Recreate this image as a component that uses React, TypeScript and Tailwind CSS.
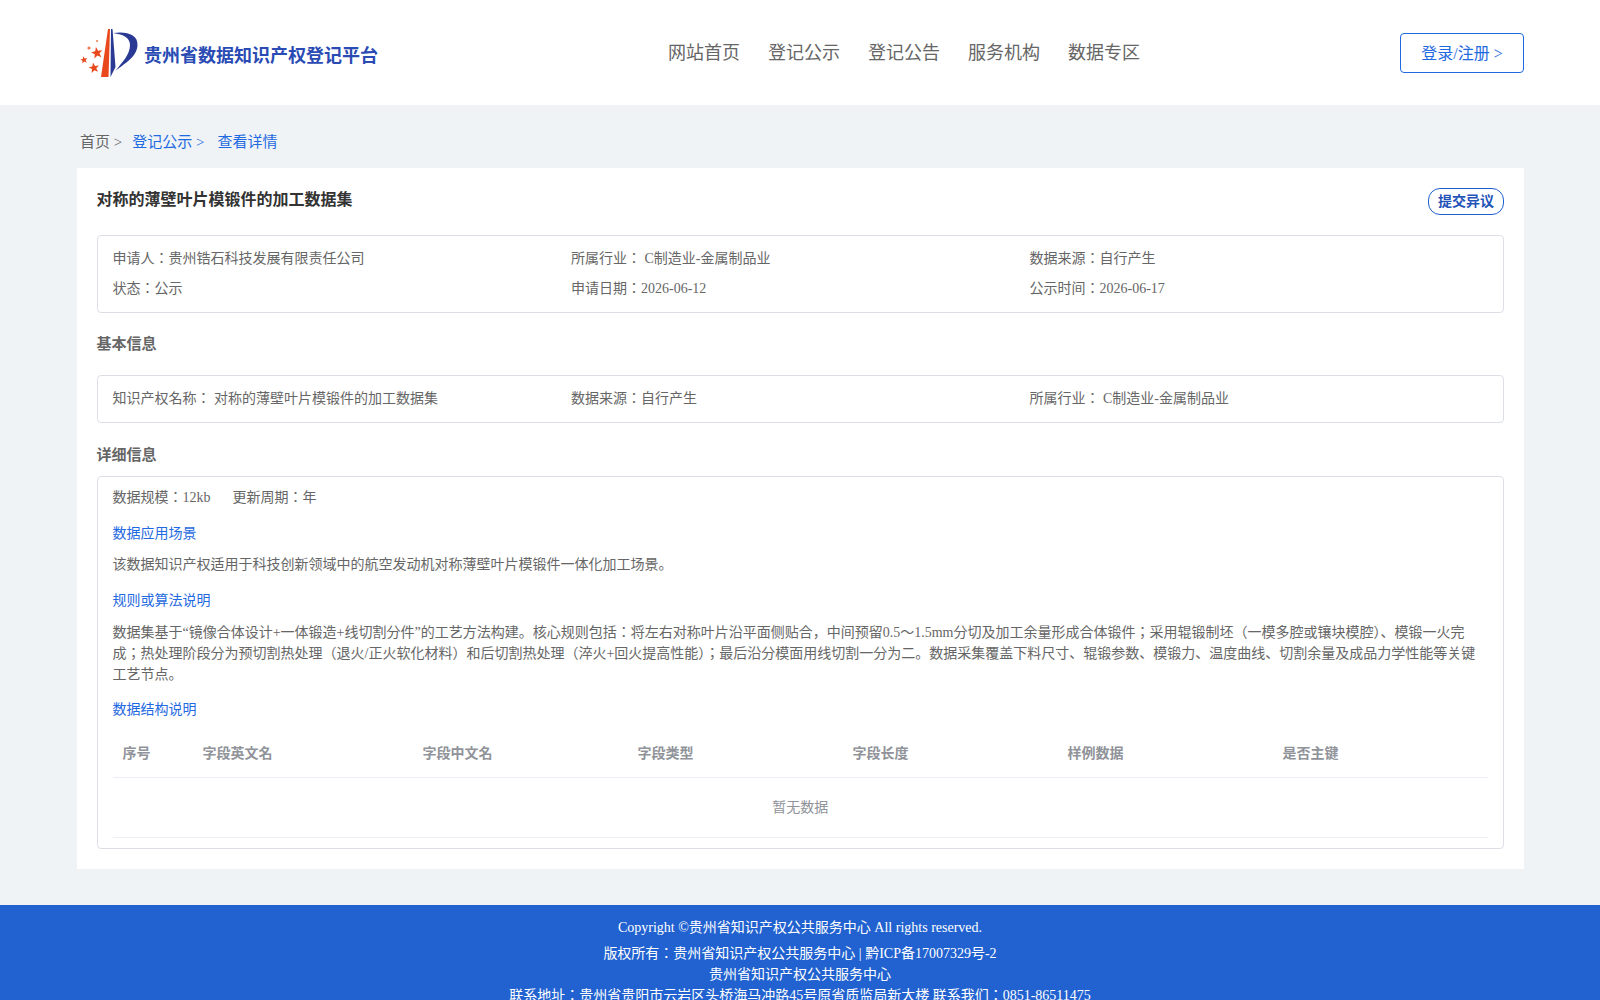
const font = { fontFamily: '"Liberation Serif", "Noto Sans CJK JP", "Noto Sans CJK SC", serif' }

const navItems = ["网站首页", "登记公示", "登记公告", "服务机构", "数据专区"]
const columns = [
  { name: "序号", w: "w-[80px]" },
  { name: "字段英文名", w: "w-[220px]" },
  { name: "字段中文名", w: "w-[215px]" },
  { name: "字段类型", w: "w-[215px]" },
  { name: "字段长度", w: "w-[215px]" },
  { name: "样例数据", w: "w-[215px]" },
  { name: "是否主键", w: "w-[215px]" },
]

function Star({ x, y, r }: { x: number; y: number; r: number }) {
  const points = Array.from({ length: 10 }, (_, i) => {
    const radius = i % 2 === 0 ? r : r * 0.42
    const angle = -1.75 + (i * Math.PI) / 5
    return `${x + radius * Math.cos(angle)},${y + radius * Math.sin(angle)}`
  }).join(" ")
  return <polygon points={points} fill="#e8481c" />
}

function Logo() {
  return (
    <svg width="60" height="52" viewBox="0 0 60 52" className="shrink-0">
      <path d="M21 49 L28 1 L30 1 L28.5 49 Z" fill="#e8481c" />
      <path d="M31 1 L32.5 1 L35.5 39 L30.5 49 Z" fill="#2a3a94" />
      <path d="M33 5 C46 3 58 6 57.5 17 C57 29 45 35 35.5 43 C42 34 50 27 50 17 C50 10 44 6.5 33 5 Z" fill="#2a3a94" />
      <Star x={17} y={25} r={6} />
      <Star x={14} y={40} r={5.5} />
      <Star x={4} y={32} r={3.8} />
      <circle cx="9" cy="20" r="1.6" fill="#ee7a50" />
      <circle cx="17" cy="13" r="1" fill="#ee7a50" />
    </svg>
  )
}

function Box({ children, className }: { children: React.ReactNode; className: string }) {
  return <div className={"border border-[#dcdfe6] rounded-[4px] px-[15px] " + className}>{children}</div>
}

function Heading({ children }: { children: React.ReactNode }) {
  return <div className="text-[#1f6ae0] text-[14px] leading-[20px]">{children}</div>
}

export default function App() {
  return (
    <div style={font} className="min-h-[1000px] bg-[#eff3f6] text-[14px] text-[#666666]">
      <header className="h-[105px] bg-white flex items-center pl-[80px] pr-[76px]">
        <div className="flex items-center gap-[4px] w-[588px] pt-[2px]">
          <Logo />
          <span className="text-[18px] font-bold text-[#2a4bb4] mt-[6px]">贵州省数据知识产权登记平台</span>
        </div>
        <nav className="flex gap-[28px] text-[18px] text-[#666666] mt-[2px]">
          {navItems.map((item) => (
            <span key={item}>{item}</span>
          ))}
        </nav>
        <button className="ml-auto w-[124px] h-[40px] border border-[#1f6ae0] rounded-[4px] text-[16px] leading-[40px] text-[#1f6ae0]">登录/注册 &gt;</button>
      </header>

      <div className="ml-[76.5px] mr-[76px]">
        <div className="h-[63px] flex items-center pl-[3.5px] text-[15px] pt-[11px]">
          <span>首页 &gt;</span>
          <span className="text-[#1f6ae0] ml-[10px]">登记公示 &gt;</span>
          <span className="text-[#1f6ae0] ml-[13px]">查看详情</span>
        </div>

        <main className="bg-white p-[20px] h-[701px]">
          <div className="flex justify-between items-start h-[47px]">
            <div className="text-[16px] font-bold text-[#333333] leading-[24px]">对称的薄壁叶片模锻件的加工数据集</div>
            <button className="h-[27px] w-[76px] border border-[#1f5fd0] rounded-[12px] font-bold text-[#1f53b8] text-[14px]">提交异议</button>
          </div>

          <Box className="h-[78px] pt-[8px]">
            <div className="grid grid-cols-3 leading-[30px]">
              <div>申请人：贵州锆石科技发展有限责任公司</div>
              <div>所属行业： C制造业-金属制品业</div>
              <div>数据来源：自行产生</div>
              <div>状态：公示</div>
              <div>申请日期：2026-06-12</div>
              <div>公示时间：2026-06-17</div>
            </div>
          </Box>

          <div className="h-[62px] flex items-center font-bold text-[15px]">基本信息</div>

          <Box className="h-[48px] flex items-center pb-[2px]">
            <div className="grid grid-cols-3 w-full">
              <div>知识产权名称： 对称的薄壁叶片模锻件的加工数据集</div>
              <div>数据来源：自行产生</div>
              <div>所属行业： C制造业-金属制品业</div>
            </div>
          </Box>

          <div className="h-[53px] flex items-center font-bold text-[15px] pt-[12px]">详细信息</div>

          <Box className="h-[373px] pt-[11px]">
            <div className="flex gap-[22px] leading-[20px]">
              <span>数据规模：12kb</span>
              <span>更新周期：年</span>
            </div>
            <div className="mt-[16px]"><Heading>数据应用场景</Heading></div>
            <p className="mt-[11px] leading-[20px]">该数据知识产权适用于科技创新领域中的航空发动机对称薄壁叶片模锻件一体化加工场景。</p>
            <div className="mt-[16px]"><Heading>规则或算法说明</Heading></div>
            <p className="mt-[11px] leading-[21px]">
              数据集基于“镜像合体设计+一体锻造+线切割分件”的工艺方法构建。核心规则包括：将左右对称叶片沿平面侧贴合，中间预留0.5～1.5mm分切及加工余量形成合体锻件；采用辊锻制坯（一模多腔或镶块模腔）、模锻一火完成；热处理阶段分为预切割热处理（退火/正火软化材料）和后切割热处理（淬火+回火提高性能）；最后沿分模面用线切割一分为二。数据采集覆盖下料尺寸、辊锻参数、模锻力、温度曲线、切割余量及成品力学性能等关键工艺节点。
            </p>
            <div className="mt-[15px]"><Heading>数据结构说明</Heading></div>
            <div className="mt-[9px] flex h-[49px] items-center border-b border-[#ebeef5] font-bold text-[#909399]">
              {columns.map((c) => (
                <div key={c.name} className={"px-[10px] " + c.w}>{c.name}</div>
              ))}
            </div>
            <div className="h-[60px] flex items-center justify-center border-b border-[#ebeef5] text-[#909399]">暂无数据</div>
          </Box>
        </main>
      </div>

      <footer className="mt-[36px] bg-[#2162d0] text-white text-center text-[14px] pt-[13px] pb-[12px]">
        <div className="leading-[20px] mb-[5px]">Copyright ©贵州省知识产权公共服务中心 All rights reserved.</div>
        <div className="leading-[21px]">版权所有：贵州省知识产权公共服务中心 | 黔ICP备17007329号-2</div>
        <div className="leading-[21px]">贵州省知识产权公共服务中心</div>
        <div className="leading-[21px]">联系地址：贵州省贵阳市云岩区头桥海马冲路45号原省质监局新大楼 联系我们：0851-86511475</div>
      </footer>
    </div>
  )
}
